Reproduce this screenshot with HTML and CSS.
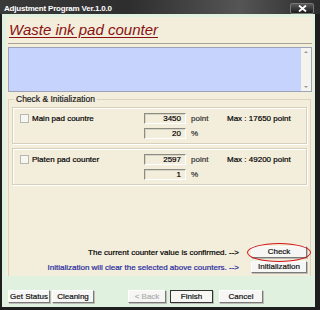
FILE: index.html
```html
<!DOCTYPE html>
<html lang="en">
<head>
    <meta charset="UTF-8">
    <title>Adjustment Program</title>
    <link rel="stylesheet" href="styles.css">
</head>
<body>
    <div class="window">
        <div class="titlebar">
            <span class="title">Adjustment Program Ver.1.0.0</span>
            <span class="close">
                <svg width="9" height="7" viewBox="0 0 9 7"><path d="M1 0.5 L8 6.5 M8 0.5 L1 6.5" stroke="#fff" stroke-width="1.8"/></svg>
            </span>
        </div>
        <div class="frame">
            <div class="panel">
                <div class="heading">Waste ink pad counter</div>
                <div class="memo">
                    <div class="scrollbar">
                        <span class="arrow up"></span>
                        <span class="arrow down"></span>
                    </div>
                </div>
                <fieldset class="group">
                    <legend>Check &amp; Initialization</legend>

                    <div class="counter">
                        <label class="counter-name"><span class="checkbox"></span>Main pad countre</label>
                        <span class="field">3450</span>
                        <span class="unit">point</span>
                        <span class="max">Max : 17650 point</span>
                        <span></span>
                        <span class="field">20</span>
                        <span class="unit">%</span>
                    </div>

                    <div class="counter">
                        <label class="counter-name"><span class="checkbox"></span>Platen pad counter</label>
                        <span class="field">2597</span>
                        <span class="unit">point</span>
                        <span class="max">Max : 49200 point</span>
                        <span></span>
                        <span class="field">1</span>
                        <span class="unit">%</span>
                    </div>

                    <div class="actions">
                        <div class="action-row">
                            <span>The current counter value is confirmed. --&gt;</span>
                            <span class="check-wrap">
                                <button class="btn action-btn">Check</button>
                                <span class="ring"></span>
                            </span>
                        </div>
                        <div class="action-row info">
                            <span>Initialization will clear the selected above counters. --&gt;</span>
                            <button class="btn action-btn">Initialization</button>
                        </div>
                    </div>
                </fieldset>
            </div>

            <div class="buttons">
                <button class="btn">Get Status</button>
                <button class="btn">Cleaning</button>
                <button class="btn back" disabled>&lt; Back</button>
                <button class="btn default">Finish</button>
                <button class="btn cancel">Cancel</button>
            </div>
        </div>
    </div>
</body>
</html>
```

FILE: styles.css
```css
body {
    margin: 0;
    background-color: #000;
    font-family: "Liberation Sans", Arial, sans-serif;
    font-size: 8px;
    color: #000;
    -webkit-text-stroke: 0.2px currentColor;
}
.window {
    width: 320px;
    height: 310px;
    display: flex;
    flex-direction: column;
    background-color: #1e1e1e;
}
.titlebar {
    height: 14px;
    flex: none;
    display: flex;
    align-items: center;
    justify-content: space-between;
    padding: 0 6px 0 4px;
    background: linear-gradient(90deg, #3a3a3a 0%, #2e2e2e 40%, #555 75%, #2c2c2c 100%);
}
.title {
    color: #fff;
    font-weight: bold;
    font-size: 8px;
    letter-spacing: -0.2px;
    padding-top: 3px;
    -webkit-text-stroke: 0;
}
.close {
    width: 22px;
    height: 9px;
    margin-top: 2px;
    display: flex;
    align-items: center;
    justify-content: center;
    background: linear-gradient(#5a5a5a, #1a1a1a);
    border: 1px solid #777;
    border-radius: 2px;
}
.frame {
    flex: 1;
    margin: 0 5px 3px 2px;
    padding: 3px 2px 0 4px;
    background-color: #e1f1e0;
    display: flex;
    flex-direction: column;
}
.panel {
    height: 259px;
    padding: 0 1px 0 2px;
    background-color: #f3eddb;
    display: flex;
    flex-direction: column;
}
.heading {
    height: 26px;
    padding-left: 1px;
    border-bottom: 1px solid #a8a493;
    color: #8a1010;
    font-style: italic;
    font-size: 15px;
    line-height: 26px;
    text-decoration: underline;
    text-decoration-thickness: 1px;
    text-underline-offset: 2px;
    -webkit-text-stroke: 0;
}
.memo {
    height: 43px;
    margin-top: 3px;
    border: 1px solid #9aa3b8;
    background-color: #c6d3fc;
    display: flex;
    justify-content: flex-end;
}
.scrollbar {
    width: 10px;
    background-color: #f4f3ee;
    display: flex;
    flex-direction: column;
    justify-content: space-between;
    align-items: center;
    padding: 3px 0;
}
.arrow {
    width: 0;
    height: 0;
    border-left: 2px solid transparent;
    border-right: 2px solid transparent;
}
.arrow.up {
    border-bottom: 2px solid #999;
}
.arrow.down {
    border-top: 2px solid #999;
}
.group {
    margin: 2px 1px 0 0;
    padding: 3px 3px 0 3px;
    border: 1px solid #d9d3c0;
    border-bottom: none;
    flex: 1;
}
.group legend {
    padding: 0 2px;
    margin-left: 2px;
    font-size: 8.5px;
    line-height: 10px;
    color: #222;
}
.counter {
    display: grid;
    grid-template-columns: 124px 42px 36px 1fr;
    grid-auto-rows: 11px;
    row-gap: 4px;
    align-items: center;
    padding: 5px 0 4px 7px;
    margin-bottom: 4px;
    border: 1px solid #d6d0bc;
    box-shadow: inset 1px 1px 0 #fff, 1px 1px 0 #fff;
}
.counter-name {
    display: flex;
    align-items: center;
    gap: 3px;
}
.checkbox {
    width: 7px;
    height: 7px;
    background-color: #f6f6f2;
    border: 1px solid #b8b8b0;
}
.field {
    height: 9px;
    line-height: 9px;
    padding-right: 4px;
    text-align: right;
    border: 1px solid;
    border-color: #8c8c84 #fff #fff #8c8c84;
    box-shadow: inset 1px 1px 0 #d8d4c4;
}
.unit {
    padding-left: 5px;
    color: #333;
}
.max {
    padding-left: 5px;
}
.actions {
    margin-top: 61px;
    display: flex;
    flex-direction: column;
    gap: 3px;
}
.action-row {
    display: flex;
    justify-content: flex-end;
    align-items: center;
    gap: 12px;
}
.action-row.info {
    color: #1f2a9e;
}
.btn {
    font-family: "Liberation Sans", Arial, sans-serif;
    font-size: 8px;
    color: #111;
    -webkit-text-stroke: 0.2px currentColor;
    white-space: nowrap;
    height: 13px;
    padding: 0;
    background-color: #f6f6f4;
    border: 1px solid;
    border-color: #fff #7a7a7a #7a7a7a #fff;
    box-shadow: 1px 1px 0 #bdbdb6;
}
.action-btn {
    width: 56px;
    height: 12px;
    line-height: 8px;
}
.check-wrap {
    position: relative;
    display: flex;
}
.ring {
    position: absolute;
    left: -4px;
    top: -3px;
    width: 62px;
    height: 17px;
    border: 1.5px solid #d01818;
    border-radius: 50%;
}
.buttons {
    display: flex;
    align-items: center;
    gap: 2px;
    margin-top: 14px;
    padding-left: 2px;
}
.buttons .btn {
    width: 42px;
}
.buttons .back {
    width: 38px;
    margin-left: 32px;
    color: #b0b0b0;
}
.buttons .default {
    width: 43px;
    margin-left: 2px;
    border-color: #333;
}
.buttons .cancel {
    width: 44px;
    margin-left: 4px;
}
```
